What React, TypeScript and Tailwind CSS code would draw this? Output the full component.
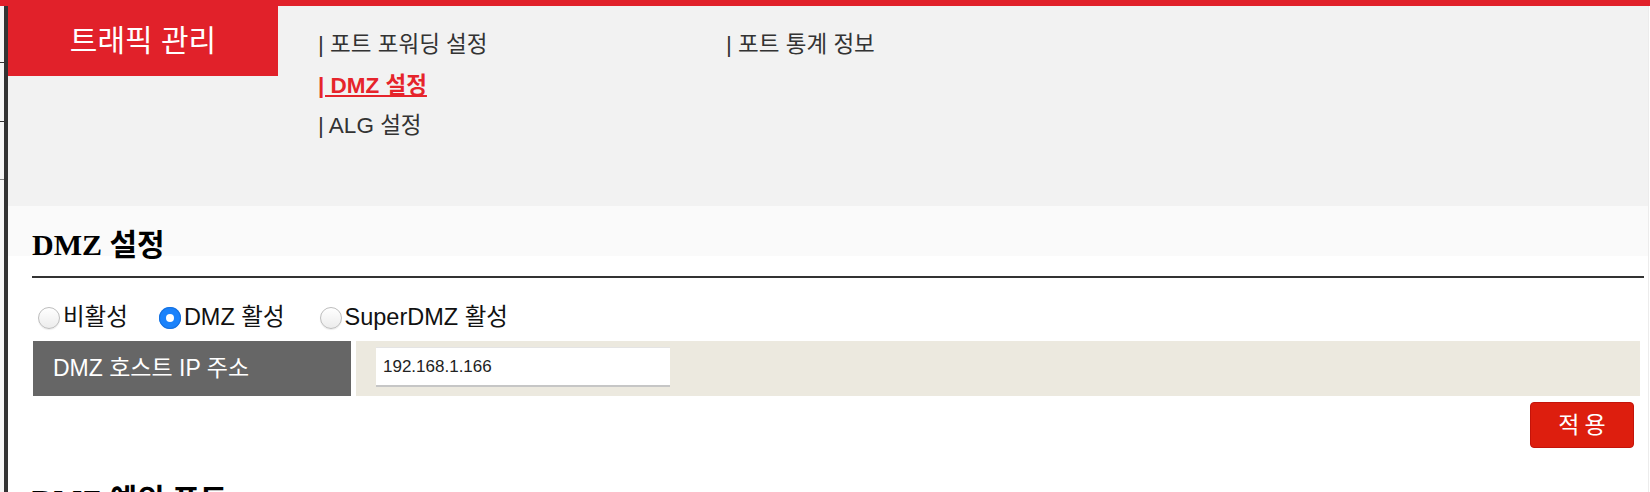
import React from "react";

const SANS = "font-['Liberation_Sans','Noto_Sans_CJK_KR',sans-serif]";

function Radio({ checked }: { checked?: boolean }) {
  if (checked) {
    return (
      <span className="flex h-[22px] w-[22px] shrink-0 items-center justify-center rounded-full bg-[#1a82fb] shadow-[inset_0_0_0_1px_#1772e0]">
        <span className="h-[8px] w-[8px] rounded-full bg-white" />
      </span>
    );
  }
  return (
    <span className="block h-[22px] w-[22px] shrink-0 rounded-full border border-[#bdbdbd] bg-gradient-to-b from-white to-[#ececec] shadow-[0_1px_1px_rgba(0,0,0,0.08)]" />
  );
}

export default function App() {
  return (
    <div className={`h-[492px] w-[1650px] overflow-hidden bg-white ${SANS}`}>
      <div className="h-[6px] w-full bg-[#e1212a]" />
      <div className="flex h-[486px]">
        {/* left frame strip */}
        <div className="flex w-[4px] shrink-0 flex-col bg-[#f7f7f7]">
          <div className="mt-[56px] h-[1px] shrink-0 bg-[#333]" />
          <div className="mt-[58px] h-[1px] shrink-0 bg-[#333]" />
          <div className="mt-[57px] h-0 shrink-0 border-t border-dashed border-[#888]" />
        </div>
        <div className="w-[4px] shrink-0 bg-[#333]" />

        {/* main */}
        <div className="flex w-[1640px] shrink-0 flex-col">
          {/* header */}
          <div className="flex h-[200px] shrink-0 bg-[#f2f2f2]">
            <div className="flex h-[70px] w-[270px] shrink-0 items-center justify-center bg-[#e1212a] text-[30px] leading-none text-white">
              트래픽 관리
            </div>
            <div className="ml-[40px] grid grid-cols-[408px_408px] content-start pt-[19px] text-[22.5px] leading-[40.5px] text-[#333]">
              <a className="cursor-pointer">| 포트 포워딩 설정</a>
              <a className="cursor-pointer">| 포트 통계 정보</a>
              <a className="cursor-pointer font-bold text-[#e6242b] underline decoration-[2px] underline-offset-[2px]">
                | DMZ 설정
              </a>
              <span />
              <a className="cursor-pointer">| ALG 설정</a>
            </div>
          </div>

          {/* title band */}
          <div className="h-[50px] shrink-0 bg-[#fafafa] pl-[24px] pt-[23px]">
            <h2 className="font-['Liberation_Serif','Noto_Sans_CJK_KR',serif] text-[30px] font-bold leading-[32px] text-black">
              DMZ 설정
            </h2>
          </div>

          <div className="flex shrink-0 flex-col pl-[24px] pr-[4px]">
            <div className="mt-[20px] h-[2px] shrink-0 bg-[#333]" />

            {/* radios */}
            <div className="mt-[25px] flex h-[30px] shrink-0 items-center pl-[6px] text-[23.5px] text-[#111]">
              <label className="flex items-center">
                <Radio />
                <span className="ml-[3px]">비활성</span>
              </label>
              <label className="ml-[31px] flex items-center">
                <Radio checked />
                <span className="ml-[3px]">DMZ 활성</span>
              </label>
              <label className="ml-[35px] flex items-center">
                <Radio />
                <span className="ml-[3px]">SuperDMZ 활성</span>
              </label>
            </div>

            {/* table row */}
            <div className="mt-[8px] ml-[1px] mr-[4px] flex h-[55px] shrink-0 gap-[5px]">
              <div className="flex w-[318px] shrink-0 items-center bg-[#666666] pl-[20px] text-[23px] text-white">
                DMZ 호스트 IP 주소
              </div>
              <div className="flex flex-1 items-start bg-[#ece9df] pl-[20px] pt-[6px]">
                <div className="flex h-[40px] w-[294px] items-center border-t border-b-2 border-t-[#e4e4e4] border-b-[#c6c6c6] bg-white pl-[7px] text-[17px] text-[#222]">
                  192.168.1.166
                </div>
              </div>
            </div>

            {/* apply */}
            <div className="mt-[6px] flex shrink-0 justify-end pr-[10px]">
              <button className="flex h-[46px] w-[104px] items-center justify-center rounded-[4px] border border-[#c4140a] bg-[#dd1e0e] text-[23px] tracking-[5px] text-white">
                <span className="ml-[5px]">적용</span>
              </button>
            </div>

            <h2 className="mt-[36px] shrink-0 font-['Liberation_Serif','Noto_Sans_CJK_KR',serif] text-[30px] font-bold leading-[32px] text-black">
              DMZ 예외 포트
            </h2>
          </div>
        </div>
        <div className="w-[2px] shrink-0 border-l border-[#ececec] bg-white" />
      </div>
    </div>
  );
}
